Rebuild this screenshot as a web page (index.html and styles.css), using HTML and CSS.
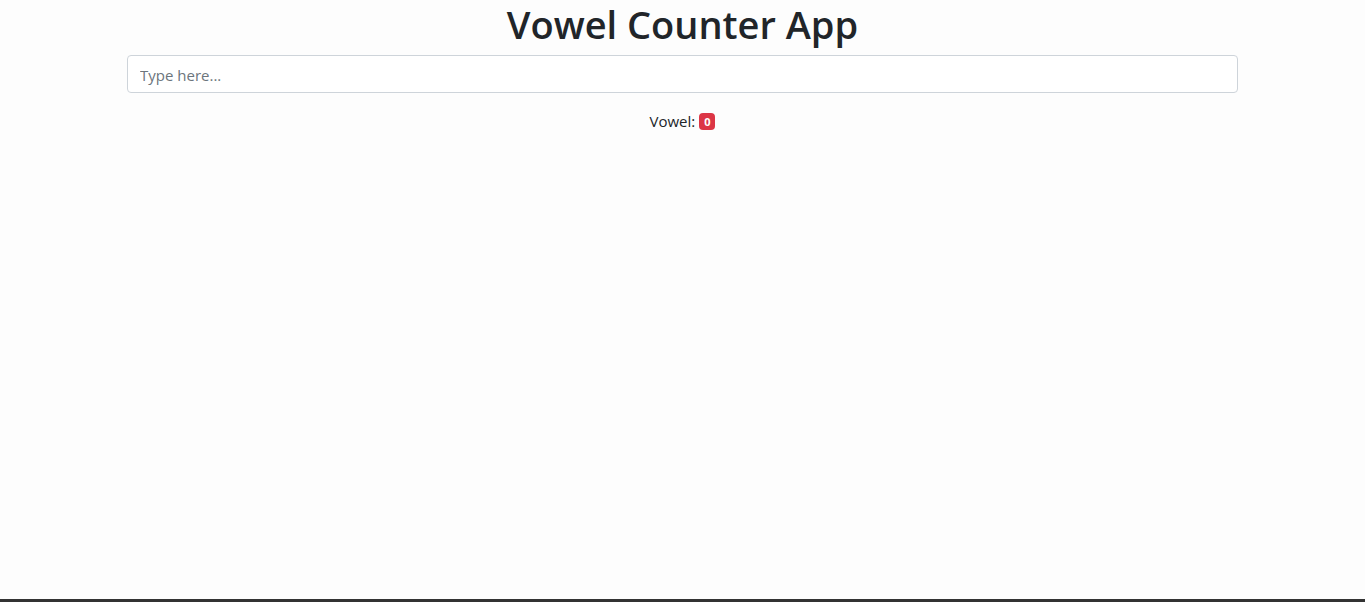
FILE: index.html
```html
<!DOCTYPE html>
<html lang="en">
<head>
<meta charset="utf-8">
<title>Vowel Counter App</title>
<link rel="stylesheet" href="styles.css">
</head>
<body>
<div class="page">
  <main class="container">
    <h1 class="title">Vowel Counter App</h1>
    <input class="field" type="text" placeholder="Type here...">
    <p class="result">Vowel: <span class="badge">0</span></p>
  </main>
  <footer class="bar"></footer>
</div>
</body>
</html>
```

FILE: styles.css
```css
* { box-sizing: border-box; }
html, body { margin: 0; padding: 0; }
body {
  font-family: "Open Sans", "Noto Sans", sans-serif;
  font-size: 16px;
  color: #212529;
  background: #fdfdfd;
}
.page {
  min-height: 100vh;
  display: flex;
  flex-direction: column;
}
.container {
  flex: 1;
  width: 1111px;
  margin: 0 auto;
  display: flex;
  flex-direction: column;
  align-items: stretch;
}
.title {
  margin: 0 0 7px;
  text-align: center;
  font-size: 38px;
  font-weight: 600;
  line-height: 48px;
  color: #212529;
}
.field {
  display: block;
  width: 100%;
  height: 38px;
  padding: 7px 12px 5px;
  font: inherit;
  font-size: 15px;
  color: #495057;
  background: #fff;
  border: 1px solid #ced4da;
  border-radius: 4px;
}
.field::placeholder { color: #6c757d; }
.result {
  margin: 16px 0 0;
  text-align: center;
  line-height: 24px;
  font-size: 15px;
}
.badge {
  display: inline-block;
  padding: 2px 5px;
  font-size: 11px;
  font-weight: 700;
  line-height: 13px;
  color: #fff;
  background: #dc3545;
  border-radius: 4px;
  vertical-align: 1px;
}
.bar {
  height: 3px;
  background: #333;
}
```
